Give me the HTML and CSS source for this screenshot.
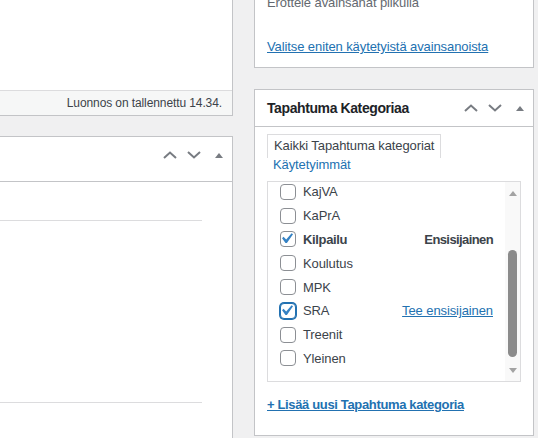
FILE: index.html
```html
<!DOCTYPE html>
<html lang="fi">
<head>
  <meta charset="UTF-8">
  <title>Muokkaa tapahtumaa</title>
  <link rel="stylesheet" href="styles.css">
</head>
<body>
  <div class="screen">
    <div class="main-col">
      <div class="editor">
        <div class="editor-body"></div>
        <div class="status-bar">Luonnos on tallennettu 14.34.</div>
      </div>

      <div class="postbox postbox-main">
        <div class="postbox-header tall">
          <h2></h2>
          <div class="handle-actions">
            <button class="handle-btn" aria-label="Siirrä ylös">
              <svg width="14" height="8" viewBox="0 0 14 8"><path d="M1 7L7 1.5L13 7" /></svg>
            </button>
            <button class="handle-btn" aria-label="Siirrä alas">
              <svg width="14" height="8" viewBox="0 0 14 8"><path d="M1 1L7 6.5L13 1" /></svg>
            </button>
            <button class="handle-btn toggle" aria-label="Näytä/piilota">
              <svg width="8" height="5" viewBox="0 0 8 5"><path class="fill" d="M0 5L4 0L8 5Z" /></svg>
            </button>
          </div>
        </div>
        <div class="inside">
          <div class="field-row first"></div>
          <div class="field-row second"></div>
        </div>
      </div>
    </div>

    <div class="side-col">
      <div class="postbox tags-box">
        <div class="inside">
          <p class="howto">Erottele avainsanat pilkulla</p>
          <p class="tagcloud"><a href="#">Valitse eniten käytetyistä avainsanoista</a></p>
        </div>
      </div>

      <div class="postbox cat-box">
        <div class="postbox-header">
          <h2>Tapahtuma Kategoriaa</h2>
          <div class="handle-actions">
            <button class="handle-btn" aria-label="Siirrä ylös">
              <svg width="14" height="8" viewBox="0 0 14 8"><path d="M1 7L7 1.5L13 7" /></svg>
            </button>
            <button class="handle-btn" aria-label="Siirrä alas">
              <svg width="14" height="8" viewBox="0 0 14 8"><path d="M1 1L7 6.5L13 1" /></svg>
            </button>
            <button class="handle-btn toggle" aria-label="Näytä/piilota">
              <svg width="8" height="5" viewBox="0 0 8 5"><path class="fill" d="M0 5L4 0L8 5Z" /></svg>
            </button>
          </div>
        </div>
        <div class="inside">
          <ul class="category-tabs">
            <li class="active">Kaikki Tapahtuma kategoriat</li>
            <li class="more"><a href="#">Käytetyimmät</a></li>
          </ul>

          <div class="tabs-panel">
            <ul class="checklist">
              <li><span class="cb"></span><span class="name">KajVA</span></li>
              <li><span class="cb"></span><span class="name">KaPrA</span></li>
              <li>
                <span class="cb checked"><svg width="14" height="14" viewBox="4.75 3.8 13.3 13.3"><path d="M14.83 4.89l1.34.94-5.81 8.38H9.02L5.78 9.67l1.34-1.25 2.57 2.4z" /></svg></span>
                <span class="name primary">Kilpailu</span>
                <span class="primary-label">Ensisijainen</span>
              </li>
              <li><span class="cb"></span><span class="name">Koulutus</span></li>
              <li><span class="cb"></span><span class="name">MPK</span></li>
              <li>
                <span class="cb checked focus"><svg width="14" height="14" viewBox="4.75 3.8 13.3 13.3"><path d="M14.83 4.89l1.34.94-5.81 8.38H9.02L5.78 9.67l1.34-1.25 2.57 2.4z" /></svg></span>
                <span class="name">SRA</span>
                <a class="make-primary" href="#">Tee ensisijainen</a>
              </li>
              <li><span class="cb"></span><span class="name">Treenit</span></li>
              <li><span class="cb"></span><span class="name">Yleinen</span></li>
            </ul>
            <div class="scrollbar">
              <div class="sb-arrow"><svg width="8" height="5" viewBox="0 0 8 5"><path d="M0 5L4 0L8 5Z" /></svg></div>
              <div class="sb-track"><div class="sb-thumb"></div></div>
              <div class="sb-arrow"><svg width="8" height="5" viewBox="0 0 8 5"><path d="M0 0L4 5L8 0Z" /></svg></div>
            </div>
          </div>

          <p class="adder"><a href="#">+ Lisää uusi Tapahtuma kategoria</a></p>
        </div>
      </div>
    </div>
  </div>
</body>
</html>
```

FILE: styles.css
```css
:root {
  --bg: #f0f0f1;
  --border: #c3c4c7;
  --border-light: #dcdcde;
  --text: #3c434a;
  --muted: #646970;
  --link: #2271b1;
  --icon: #787c82;
}

* {
  margin: 0;
  padding: 0;
  box-sizing: border-box;
}

body {
  background: var(--bg);
  color: var(--text);
  font-family: "Segoe UI", "Liberation Sans", Arial, sans-serif;
  font-size: 13px;
  line-height: 19px;
  letter-spacing: -0.1px;
  overflow: hidden;
}

a {
  color: var(--link);
}

.screen {
  display: grid;
  grid-template-columns: 233px 280px;
  column-gap: 21px;
  height: 438px;
  overflow: hidden;
}

/* vasen sarake */
.editor {
  background: #fff;
  border-right: 1px solid var(--border);
  border-bottom: 1px solid var(--border);
}
.editor-body {
  height: 90px;
}
.status-bar {
  height: 25px;
  border-top: 1px solid var(--border-light);
  background: #f6f7f7;
  text-align: right;
  padding-right: 10px;
  font-size: 12px;
  line-height: 24px;
}

.postbox {
  background: #fff;
  border: 1px solid var(--border);
}
.postbox-main {
  margin-top: 20px;
  border-left: none;
  height: 340px;
}

.postbox-header {
  display: flex;
  justify-content: space-between;
  align-items: flex-start;
  height: 37px;
  border-bottom: 1px solid var(--border);
}
.postbox-header.tall {
  height: 45px;
}
.postbox-header h2 {
  font-size: 14px;
  font-weight: bold;
  line-height: 36px;
  padding-left: 12px;
  letter-spacing: -0.4px;
  color: #1d2327;
}

.handle-actions {
  display: flex;
}
.handle-btn {
  width: 24px;
  height: 36px;
  border: none;
  background: none;
  display: flex;
  align-items: center;
  justify-content: center;
}
.handle-btn.toggle {
  width: 26px;
}
.handle-btn path {
  fill: none;
  stroke: var(--icon);
  stroke-width: 2;
}
.handle-btn path.fill {
  fill: var(--icon);
  stroke: none;
}

.postbox-main .inside {
  padding: 0;
}
.field-row {
  margin-right: 30px;
  border-bottom: 1px solid var(--border-light);
}
.field-row.first {
  height: 39px;
}
.field-row.second {
  height: 182px;
}

/* oikea sarake */
.tags-box {
  margin-top: -20px;
}
.tags-box .inside {
  padding: 12px 12px 11px;
}
.howto {
  color: var(--muted);
}
.tagcloud {
  margin-top: 25px;
}

.cat-box {
  margin-top: 21px;
}
.cat-box .inside {
  padding: 0 12px;
}

.category-tabs {
  list-style: none;
  margin-top: 9px;
}
.category-tabs li.active {
  display: inline;
  padding: 3px 6px 5px;
  border: 1px solid var(--border-light);
  border-bottom: none;
}
.category-tabs li.more {
  padding-left: 6px;
}
.category-tabs li.more a {
  text-decoration: none;
}

.tabs-panel {
  display: flex;
  margin-top: 7px;
  height: 201px;
  border: 1px solid var(--border-light);
  overflow: hidden;
}

.checklist {
  flex: 1;
  list-style: none;
  padding: 0 12px;
  margin-top: -2px;
}
.checklist li {
  display: flex;
  align-items: center;
  height: 23.8px;
}
.cb {
  width: 16px;
  height: 16px;
  border: 1px solid #8c8f94;
  border-radius: 4px;
  background: #fff;
  margin-right: 7px;
  display: flex;
  flex-shrink: 0;
}
.cb path {
  fill: #3582c4;
}
.cb.focus {
  border-color: #2271b1;
  box-shadow: 0 0 0 1px #2271b1;
}
.name.primary {
  font-weight: bold;
  letter-spacing: -0.35px;
}
.primary-label {
  margin-left: auto;
  font-weight: bold;
  letter-spacing: -0.6px;
}
.make-primary {
  margin-left: auto;
}

.scrollbar {
  width: 15px;
  display: flex;
  flex-direction: column;
  background: #f9f9f9;
}
.sb-arrow {
  height: 22px;
  display: flex;
  align-items: center;
  justify-content: center;
}
.sb-arrow path {
  fill: #a3a3a3;
}
.sb-track {
  flex: 1;
  padding: 0 3px;
}
.sb-thumb {
  margin-top: 46px;
  height: 107px;
  border-radius: 5px;
  background: #8b8b8b;
}

.adder {
  margin-top: 13px;
  padding-bottom: 21px;
}
.adder a {
  font-weight: bold;
  letter-spacing: -0.35px;
}
```
